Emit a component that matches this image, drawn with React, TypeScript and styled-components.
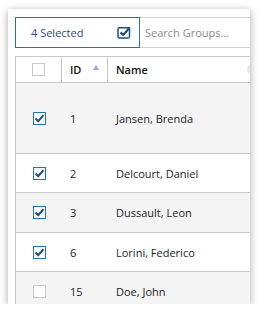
import styled, { createGlobalStyle } from "styled-components";

const GlobalStyle = createGlobalStyle`
  html, body {
    margin: 0;
    padding: 0;
    background: #ffffff;
  }
  body {
    font-family: "Open Sans", "Liberation Sans", sans-serif;
  }
`;

const Card = styled.div`
  margin: 9px 0 0 8px;
  width: 242px;
  height: 295px;
  background: #ffffff;
  box-shadow: 0 2px 8px rgba(0, 0, 0, 0.35);
  overflow: hidden;
  padding: 8px 0 0 7px;
  box-sizing: border-box;
`;

const Toolbar = styled.div`
  display: flex;
  height: 31px;
  width: 260px;
  margin-bottom: 8px;
`;

const SelectedBox = styled.div`
  display: flex;
  align-items: center;
  justify-content: space-between;
  width: 125px;
  box-sizing: border-box;
  border: 1px solid #1a73c8;
  padding: 0 7px 0 15px;
  font-size: 11px;
  color: #1d4f86;
`;

const SearchBox = styled.div`
  flex: 1;
  display: flex;
  align-items: center;
  box-sizing: border-box;
  border: 1px solid #d2d2d2;
  border-left: none;
  padding-left: 5px;
  font-size: 11px;
  color: #8a8a8a;
`;

const Table = styled.div`
  width: 260px;
  border-left: 1px solid #c8c8c8;
  border-top: 1px solid #c8c8c8;
`;

const HeaderRow = styled.div`
  display: flex;
  height: 25px;
  border-bottom: 1px solid #c8c8c8;
  font-size: 11px;
  font-weight: 600;
  color: #111111;
`;

const HeaderCell = styled.div<{ $w?: number; $center?: boolean }>`
  position: relative;
  display: flex;
  align-items: center;
  width: ${(p) => (p.$w ? `${p.$w}px` : "auto")};
  flex: ${(p) => (p.$w ? "none" : "1")};
  box-sizing: border-box;
  padding-left: ${(p) => (p.$center ? "0" : "8px")};
  justify-content: ${(p) => (p.$center ? "center" : "flex-start")};
  border-right: ${(p) => (p.$w ? "1px solid #c8c8c8" : "none")};
`;

const SortArrow = styled.span`
  position: absolute;
  right: 8px;
  top: 8px;
  width: 0;
  height: 0;
  border-left: 3px solid transparent;
  border-right: 3px solid transparent;
  border-bottom: 5px solid #9f9fe0;
`;

const MenuDot = styled.span`
  position: absolute;
  left: 139px;
  top: 6px;
  width: 12px;
  height: 12px;
  border-radius: 50%;
  background: #e6e6e6;
`;

const Row = styled.div<{ $h: number; $odd: boolean }>`
  display: flex;
  align-items: center;
  height: ${(p) => p.$h}px;
  background: ${(p) => (p.$odd ? "#f4f4f4" : "#ffffff")};
  border-bottom: 1px solid #c8c8c8;
  font-size: 11px;
  color: #1e1e1e;
`;

const CheckCell = styled.div`
  width: 46px;
  display: flex;
  justify-content: center;
`;

const IdCell = styled.div`
  width: 46px;
  padding-left: 8px;
  box-sizing: border-box;
`;

const NameCell = styled.div`
  flex: 1;
  padding-left: 8px;
`;

const Box = styled.div<{ $on: boolean }>`
  width: 13px;
  height: 13px;
  box-sizing: border-box;
  border: 1px solid ${(p) => (p.$on ? "#1a73c8" : "#c9c9c9")};
  background: #ffffff;
  display: flex;
  align-items: center;
  justify-content: center;
`;

function Check({ on }: { on: boolean }) {
  return (
    <Box $on={on}>
      {on && (
        <svg width="11" height="11" viewBox="0 0 11 11">
          <path d="M1.5 5.5 L4.2 8.2 L9.5 2.2" fill="none" stroke="#1b4f85" strokeWidth="2" />
        </svg>
      )}
    </Box>
  );
}

function ToolbarIcon() {
  return (
    <svg width="15" height="13" viewBox="0 0 15 13">
      <rect x="1" y="1.8" width="11.5" height="10.2" rx="1.6" fill="none" stroke="#1d4f86" strokeWidth="1.5" />
      <path d="M3.6 6.4 L6.2 9 L12.8 1.6" fill="none" stroke="#1d4f86" strokeWidth="2.2" />
    </svg>
  );
}

const rows = [
  { id: "1", name: "Jansen, Brenda", on: true, h: 70 },
  { id: "2", name: "Delcourt, Daniel", on: true, h: 38 },
  { id: "3", name: "Dussault, Leon", on: true, h: 39 },
  { id: "6", name: "Lorini, Federico", on: true, h: 38 },
  { id: "15", name: "Doe, John", on: false, h: 38 },
];

export default function App() {
  return (
    <>
      <GlobalStyle />
      <Card>
        <Toolbar>
          <SelectedBox>
            <span>4 Selected</span>
            <ToolbarIcon />
          </SelectedBox>
          <SearchBox>Search Groups...</SearchBox>
        </Toolbar>
        <Table>
          <HeaderRow>
            <HeaderCell $w={46} $center>
              <Check on={false} />
            </HeaderCell>
            <HeaderCell $w={46}>
              ID
              <SortArrow />
            </HeaderCell>
            <HeaderCell>
              Name
              <MenuDot />
            </HeaderCell>
          </HeaderRow>
          {rows.map((r, i) => (
            <Row key={r.id} $h={r.h} $odd={i % 2 === 0}>
              <CheckCell>
                <Check on={r.on} />
              </CheckCell>
              <IdCell>{r.id}</IdCell>
              <NameCell>{r.name}</NameCell>
            </Row>
          ))}
        </Table>
      </Card>
    </>
  );
}
